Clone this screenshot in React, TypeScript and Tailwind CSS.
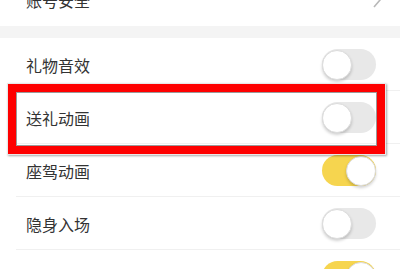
import React from "react";

function Toggle({ on }: { on: boolean }) {
  return (
    <div
      className={
        "relative w-[54px] h-[31px] rounded-full flex items-center " +
        (on ? "bg-[#f6d54f] justify-end" : "bg-[#e8e8e8] justify-start")
      }
    >
      <div className="w-[30px] h-[30px] rounded-full bg-white border border-[#dcdcdc] shadow-[0_2px_3px_rgba(0,0,0,0.18)]" />
    </div>
  );
}

function Row({ label, on, divider = true }: { label: string; on: boolean; divider?: boolean }) {
  return (
    <div className="relative h-[53px] flex items-center justify-between pl-[26px] pr-[24px] shrink-0">
      <span className="text-[16px] text-[#333333] leading-none">{label}</span>
      <Toggle on={on} />
      {divider && <div className="absolute left-[16px] right-0 bottom-0 h-px bg-[#f0f0f0]" />}
    </div>
  );
}

export default function App() {
  return (
    <div
      className="relative w-[400px] h-[269px] overflow-hidden bg-white"
      style={{ fontFamily: '"Noto Sans CJK SC", "Noto Sans", sans-serif' }}
    >
      <div className="flex flex-col">
        <div className="-mt-[27px] h-[53px] shrink-0 flex items-center justify-between pl-[26px] pr-[18px]">
          <span className="text-[16px] text-[#333333] leading-none">账号安全</span>
          <svg width="10" height="16" viewBox="0 0 10 16" className="text-[#b8b8b8]">
            <path d="M2 1 L8 8 L2 15" fill="none" stroke="currentColor" strokeWidth="1.6" />
          </svg>
        </div>
        <div className="h-[12px] shrink-0 bg-[#f4f4f4]" />
        <Row label="礼物音效" on={false} />
        <Row label="送礼动画" on={false} />
        <Row label="座驾动画" on={true} />
        <Row label="隐身入场" on={false} />
        <Row label="进场特效" on={true} />
      </div>
      <div className="absolute left-[7px] top-[83px] w-[379px] h-[72px] border border-[#e8e8e8] shadow-[1px_1px_2px_rgba(0,0,0,0.35)]">
        <div className="w-full h-full border-[8px] border-[#fe0000]">
          <div className="w-full h-full border border-[#9a9a9a]" />
        </div>
      </div>
    </div>
  );
}
